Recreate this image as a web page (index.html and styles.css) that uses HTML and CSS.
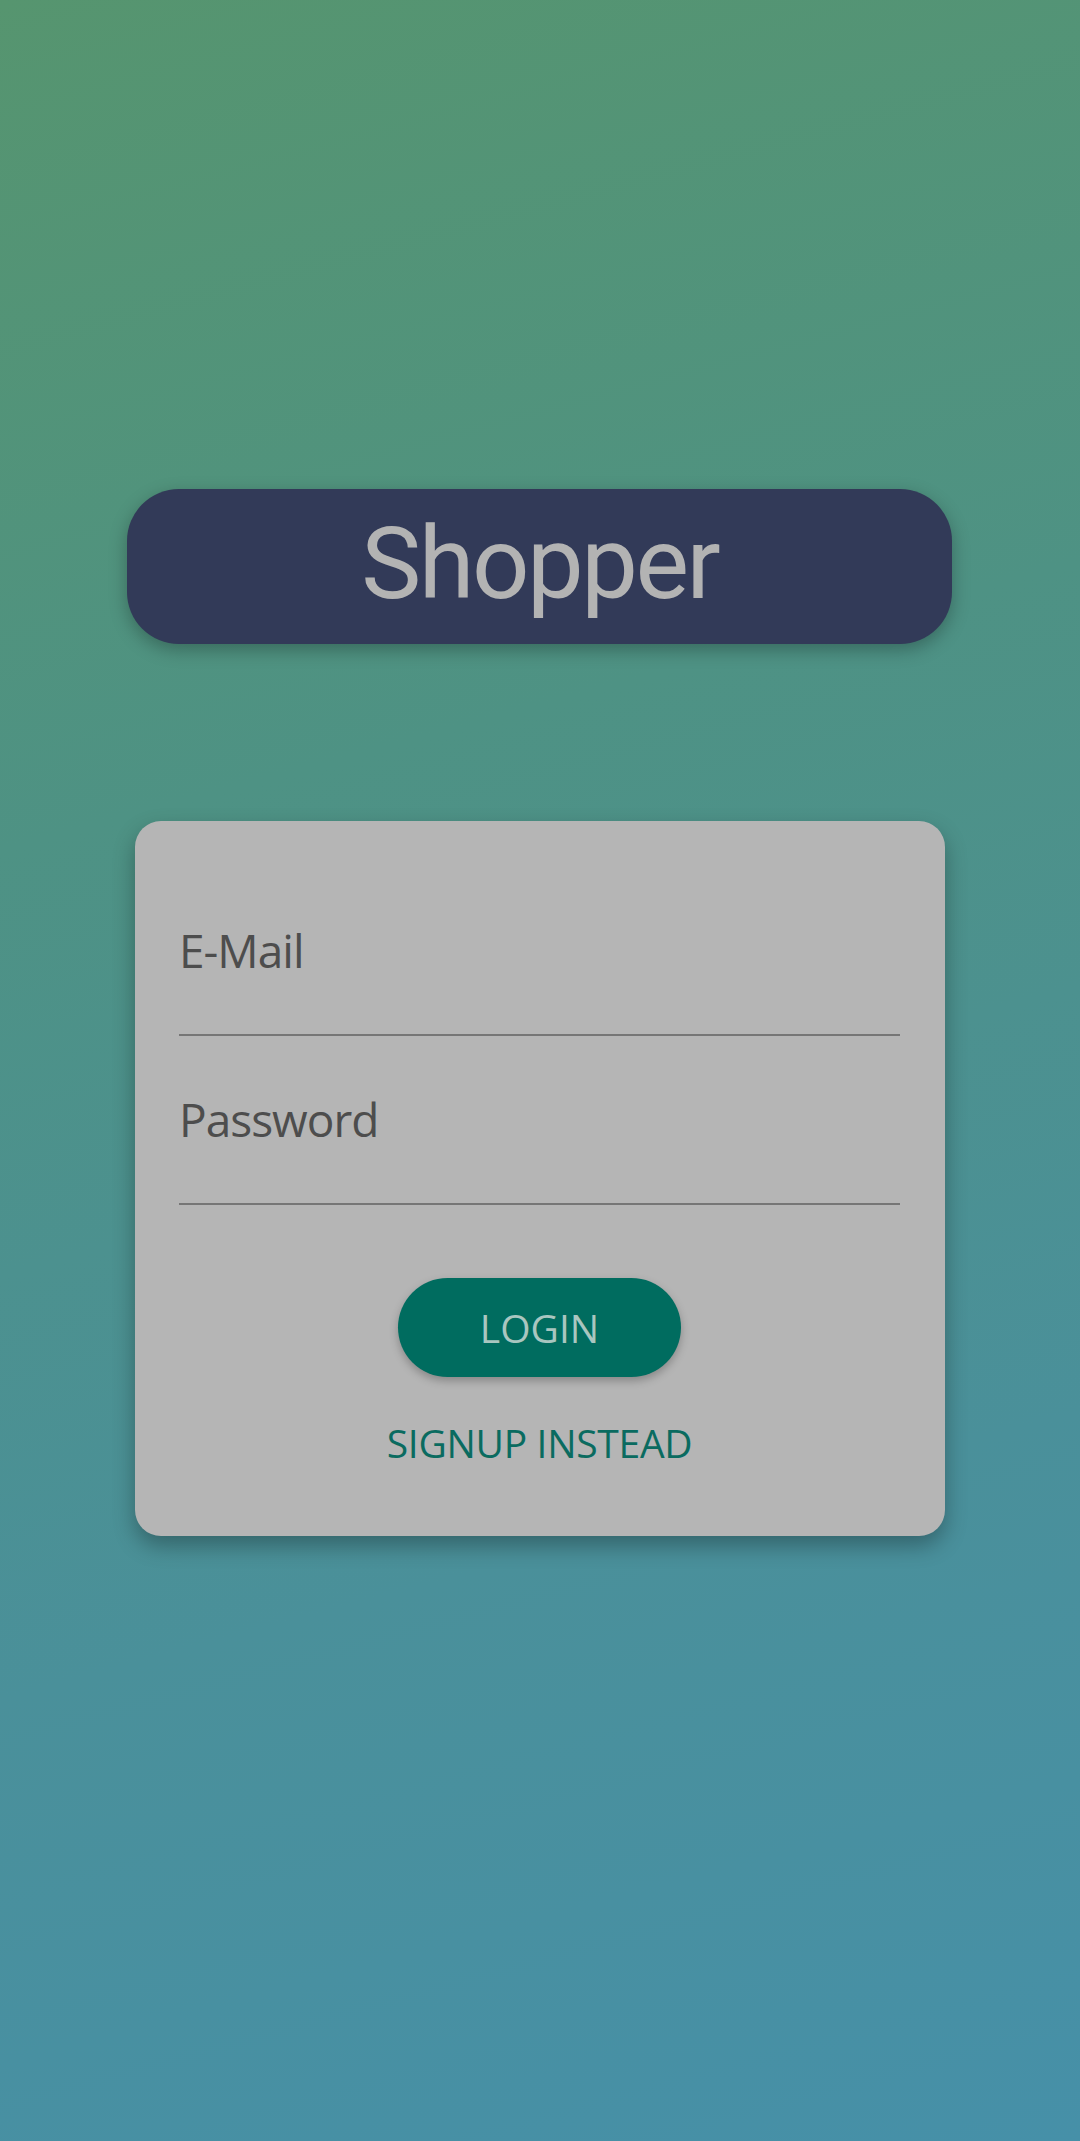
FILE: index.html
```html
<!DOCTYPE html>
<html lang="en">
<head>
<meta charset="utf-8">
<title>Shopper</title>
<link rel="stylesheet" href="styles.css">
</head>
<body>
<main class="screen">
  <div class="brand"><span class="brand-text">Shopper</span></div>
  <form class="card">
    <div class="field"><span class="field-label">E-Mail</span></div>
    <div class="field"><span class="field-label">Password</span></div>
    <div class="actions">
      <button type="button" class="btn-login">LOGIN</button>
      <button type="button" class="btn-signup">SIGNUP INSTEAD</button>
    </div>
  </form>
</main>
</body>
</html>
```

FILE: styles.css
```css
* { box-sizing: border-box; }
html, body { margin: 0; padding: 0; }
body {
  width: 1080px;
  min-height: 2141px;
  background: linear-gradient(165deg, #56956f 0%, #4e9284 35%, #4a909a 70%, #4690a8 100%);
  font-family: "Open Sans", "Noto Sans", sans-serif;
}
.screen {
  display: flex;
  flex-direction: column;
  align-items: center;
  padding-top: 489px;
  min-height: 2141px;
}
.brand {
  width: 825px;
  height: 155px;
  margin-left: -0.5px;
  background: #323a58;
  border-radius: 52px;
  box-shadow: 0 6px 18px rgba(0, 0, 0, 0.28);
  display: flex;
  align-items: center;
  justify-content: center;
}
.brand-text {
  font-family: Roboto, "Liberation Sans", sans-serif;
  font-size: 101px;
  letter-spacing: -2.5px;
  line-height: 1;
  color: #b3b3b3;
  margin-top: -6px;
}
.card {
  margin-top: 177px;
  width: 810px;
  height: 715px;
  background: #b5b5b5;
  border-radius: 26px;
  box-shadow: 0 10px 22px rgba(0, 0, 0, 0.3);
  padding: 97px 45px 0 44px;
  display: flex;
  flex-direction: column;
}
.field {
  height: 118px;
  border-bottom: 2px solid #767676;
  margin-bottom: 51px;
}
.field-label {
  display: block;
  font-size: 46px;
  letter-spacing: -1px;
  line-height: 64px;
  color: #4d4d4d;
}
.actions {
  display: flex;
  flex-direction: column;
  align-items: center;
  margin-top: 22px;
}
.btn-login {
  width: 283px;
  height: 99px;
  border: none;
  border-radius: 50px;
  background: #006c5f;
  color: #a9c6c0;
  font-family: "Open Sans", "Noto Sans", sans-serif;
  font-size: 39px;
  padding: 0;
  box-shadow: 0 4px 8px rgba(0, 0, 0, 0.25);
}
.btn-signup {
  margin-top: 39px;
  border: none;
  background: none;
  padding: 0;
  color: #0a6b60;
  font-family: "Open Sans", "Noto Sans", sans-serif;
  font-size: 39px;
  letter-spacing: -0.3px;
  line-height: 53px;
}
```
